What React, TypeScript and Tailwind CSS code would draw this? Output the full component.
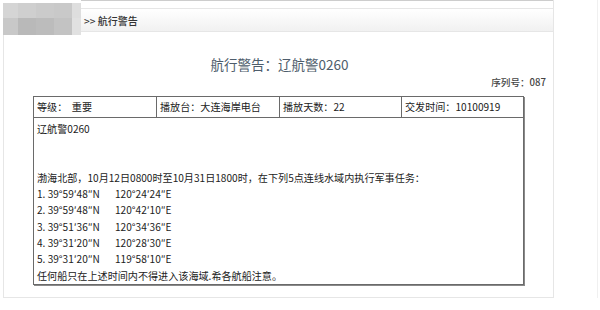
const font = { fontFamily: '"Noto Sans CJK SC", "Noto Sans", sans-serif' };

const mosaic = [
  ['#d5d5d5', '#cfcfcf', '#cbcbcb', '#c9c9c9', '#dedede'],
  ['#c8c8c8', '#b9b9b9', '#bcbcbc', '#c3c3c3', '#e1e1e1'],
];

const points = [
  ['1. 39°59′48″N', '120°24′24″E'],
  ['2. 39°59′48″N', '120°42′10″E'],
  ['3. 39°51′36″N', '120°34′36″E'],
  ['4. 39°31′20″N', '120°28′30″E'],
  ['5. 39°31′20″N', '119°58′10″E'],
];

export default function App() {
  return (
    <div className="w-[600px] h-[310px] bg-white flex text-[#222]" style={font}>
      <div className="w-[554px] h-[298px] flex flex-col border-r border-[#e6e6e6]">
        <div className="flex h-[35px] shrink-0">
          <div className="ml-[3px] mt-[3px] w-[78px] h-[32px] grid grid-cols-[15px_18px_18px_18px_9px] grid-rows-[15px_17px]">
            {mosaic.flat().map((c, i) => (
              <div key={i} style={{ backgroundColor: c }} />
            ))}
          </div>
          <div className="flex-1 border-t border-[#cdcdcd]">
            <div className="mt-[7px] h-[24px] border-y border-[#e6e6e6] bg-gradient-to-b from-white to-[#f1f1f1] flex items-center pl-[3px] text-[10px] font-medium text-[#333]">
              &gt;&gt; 航行警告
            </div>
          </div>
        </div>
        <div className="flex-1 ml-[3px] border-l border-b border-[#e6e6e6] flex flex-col">
          <div className="pt-[19px] text-center text-[13.5px] leading-[20px] text-[#4e5d6b] pl-[2px]">
            航行警告：辽航警0260
          </div>
          <div className="text-right pr-[7px] text-[9.6px] leading-[12px] mt-[2px] font-medium text-[#444]">
            序列号：087
          </div>
          <table className="mx-[29px] mt-[8px] table-fixed border-collapse border border-[#6a6a6a] text-[10.1px] shadow-[1px_1px_0_#8a8a8a]">
            <colgroup>
              <col className="w-[123px]" />
              <col className="w-[123px]" />
              <col className="w-[122px]" />
              <col />
            </colgroup>
            <tbody>
              <tr className="h-[21px]">
                <td className="border border-[#6a6a6a] px-[3px] whitespace-pre">等级：  重要</td>
                <td className="border border-[#6a6a6a] px-[3px]">播放台：大连海岸电台</td>
                <td className="border border-[#6a6a6a] px-[3px]">播放天数：22</td>
                <td className="border border-[#6a6a6a] px-[3px]">交发时间：10100919</td>
              </tr>
              <tr className="h-[167px]">
                <td colSpan={4} className="border border-[#6a6a6a] px-[3px] pt-[3px] align-top leading-[16.3px]">
                  <div>辽航警0260</div>
                  <div className="h-[32.6px]" />
                  <div>渤海北部，10月12日0800时至10月31日1800时，在下列5点连线水域内执行军事任务：</div>
                  {points.map(([n, e]) => (
                    <div key={n} className="flex">
                      <span className="w-[78px]">{n}</span>
                      <span>{e}</span>
                    </div>
                  ))}
                  <div>任何船只在上述时间内不得进入该海域.希各航船注意。</div>
                </td>
              </tr>
            </tbody>
          </table>
        </div>
      </div>
      <div className="flex-1 flex justify-end">
        <div className="w-px h-[298px] bg-[#f0f0f0] mr-[2px]" />
      </div>
    </div>
  );
}
